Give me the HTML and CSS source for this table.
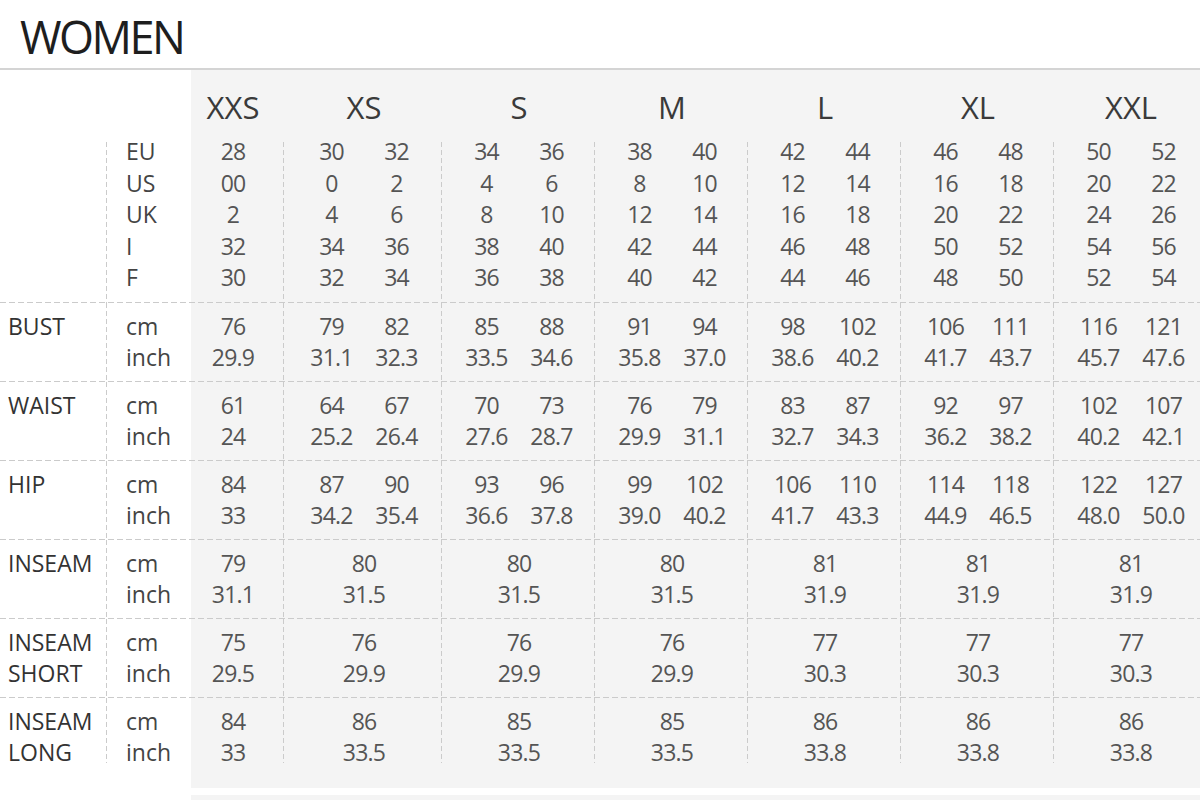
FILE: index.html
```
<!DOCTYPE html>
<html lang="en">
<head>
<meta charset="utf-8">
<title>WOMEN size chart</title>
<link rel="stylesheet" href="styles.css">
</head>
<body>
<h1 class="title">WOMEN</h1>
<div class="chart">
  <div class="row head">
    <div class="cell"></div>
    <div class="cell"></div>
    <div class="cell c">XXS</div>
    <div class="cell single xs"><span>XS</span></div>
    <div class="cell single"><span>S</span></div>
    <div class="cell single"><span>M</span></div>
    <div class="cell single"><span>L</span></div>
    <div class="cell single"><span>XL</span></div>
    <div class="cell single"><span>XXL</span></div>
  </div>

  <div class="row conv sep">
    <div class="cell lab vr"></div>
    <div class="cell unit"><span>EU</span><span>US</span><span>UK</span><span>I</span><span>F</span></div>
    <div class="cell c num vr"><span>28</span><span>00</span><span>2</span><span>32</span><span>30</span></div>
    <div class="cell pair num vr xs"><span>30</span><span>32</span><span>0</span><span>2</span><span>4</span><span>6</span><span>34</span><span>36</span><span>32</span><span>34</span></div>
    <div class="cell pair num vr"><span>34</span><span>36</span><span>4</span><span>6</span><span>8</span><span>10</span><span>38</span><span>40</span><span>36</span><span>38</span></div>
    <div class="cell pair num vr"><span>38</span><span>40</span><span>8</span><span>10</span><span>12</span><span>14</span><span>42</span><span>44</span><span>40</span><span>42</span></div>
    <div class="cell pair num vr"><span>42</span><span>44</span><span>12</span><span>14</span><span>16</span><span>18</span><span>46</span><span>48</span><span>44</span><span>46</span></div>
    <div class="cell pair num vr"><span>46</span><span>48</span><span>16</span><span>18</span><span>20</span><span>22</span><span>50</span><span>52</span><span>48</span><span>50</span></div>
    <div class="cell pair num"><span>50</span><span>52</span><span>20</span><span>22</span><span>24</span><span>26</span><span>54</span><span>56</span><span>52</span><span>54</span></div>
  </div>

  <div class="row meas sep">
    <div class="cell lab vr"><span>BUST</span></div>
    <div class="cell unit"><span>cm</span><span>inch</span></div>
    <div class="cell c num vr"><span>76</span><span>29.9</span></div>
    <div class="cell pair num vr xs"><span>79</span><span>82</span><span>31.1</span><span>32.3</span></div>
    <div class="cell pair num vr"><span>85</span><span>88</span><span>33.5</span><span>34.6</span></div>
    <div class="cell pair num vr"><span>91</span><span>94</span><span>35.8</span><span>37.0</span></div>
    <div class="cell pair num vr"><span>98</span><span>102</span><span>38.6</span><span>40.2</span></div>
    <div class="cell pair num vr"><span>106</span><span>111</span><span>41.7</span><span>43.7</span></div>
    <div class="cell pair num"><span>116</span><span>121</span><span>45.7</span><span>47.6</span></div>
  </div>

  <div class="row meas sep">
    <div class="cell lab vr"><span>WAIST</span></div>
    <div class="cell unit"><span>cm</span><span>inch</span></div>
    <div class="cell c num vr"><span>61</span><span>24</span></div>
    <div class="cell pair num vr xs"><span>64</span><span>67</span><span>25.2</span><span>26.4</span></div>
    <div class="cell pair num vr"><span>70</span><span>73</span><span>27.6</span><span>28.7</span></div>
    <div class="cell pair num vr"><span>76</span><span>79</span><span>29.9</span><span>31.1</span></div>
    <div class="cell pair num vr"><span>83</span><span>87</span><span>32.7</span><span>34.3</span></div>
    <div class="cell pair num vr"><span>92</span><span>97</span><span>36.2</span><span>38.2</span></div>
    <div class="cell pair num"><span>102</span><span>107</span><span>40.2</span><span>42.1</span></div>
  </div>

  <div class="row meas sep">
    <div class="cell lab vr"><span>HIP</span></div>
    <div class="cell unit"><span>cm</span><span>inch</span></div>
    <div class="cell c num vr"><span>84</span><span>33</span></div>
    <div class="cell pair num vr xs"><span>87</span><span>90</span><span>34.2</span><span>35.4</span></div>
    <div class="cell pair num vr"><span>93</span><span>96</span><span>36.6</span><span>37.8</span></div>
    <div class="cell pair num vr"><span>99</span><span>102</span><span>39.0</span><span>40.2</span></div>
    <div class="cell pair num vr"><span>106</span><span>110</span><span>41.7</span><span>43.3</span></div>
    <div class="cell pair num vr"><span>114</span><span>118</span><span>44.9</span><span>46.5</span></div>
    <div class="cell pair num"><span>122</span><span>127</span><span>48.0</span><span>50.0</span></div>
  </div>

  <div class="row meas sep">
    <div class="cell lab vr"><span>INSEAM</span></div>
    <div class="cell unit"><span>cm</span><span>inch</span></div>
    <div class="cell c num vr"><span>79</span><span>31.1</span></div>
    <div class="cell single num vr xs"><span>80</span><span>31.5</span></div>
    <div class="cell single num vr"><span>80</span><span>31.5</span></div>
    <div class="cell single num vr"><span>80</span><span>31.5</span></div>
    <div class="cell single num vr"><span>81</span><span>31.9</span></div>
    <div class="cell single num vr"><span>81</span><span>31.9</span></div>
    <div class="cell single num"><span>81</span><span>31.9</span></div>
  </div>

  <div class="row meas sep">
    <div class="cell lab vr"><span>INSEAM</span><span>SHORT</span></div>
    <div class="cell unit"><span>cm</span><span>inch</span></div>
    <div class="cell c num vr"><span>75</span><span>29.5</span></div>
    <div class="cell single num vr xs"><span>76</span><span>29.9</span></div>
    <div class="cell single num vr"><span>76</span><span>29.9</span></div>
    <div class="cell single num vr"><span>76</span><span>29.9</span></div>
    <div class="cell single num vr"><span>77</span><span>30.3</span></div>
    <div class="cell single num vr"><span>77</span><span>30.3</span></div>
    <div class="cell single num"><span>77</span><span>30.3</span></div>
  </div>

  <div class="row meas last">
    <div class="cell lab vr"><span>INSEAM</span><span>LONG</span></div>
    <div class="cell unit"><span>cm</span><span>inch</span></div>
    <div class="cell c num vr"><span>84</span><span>33</span></div>
    <div class="cell single num vr xs"><span>86</span><span>33.5</span></div>
    <div class="cell single num vr"><span>85</span><span>33.5</span></div>
    <div class="cell single num vr"><span>85</span><span>33.5</span></div>
    <div class="cell single num vr"><span>86</span><span>33.8</span></div>
    <div class="cell single num vr"><span>86</span><span>33.8</span></div>
    <div class="cell single num"><span>86</span><span>33.8</span></div>
  </div>
</div>
<div class="foot"></div>
</body>
</html>
```
FILE: styles.css
```
html, body {
  margin: 0;
  padding: 0;
  background: #ffffff;
}

body {
  width: 1200px;
  height: 800px;
  overflow: hidden;
  font-family: "Open Sans", "Noto Sans", sans-serif;
}

.title {
  margin: 0;
  padding: 4px 0 0 20px;
  height: 64px;
  font-size: 45px;
  font-weight: 400;
  line-height: 66px;
  letter-spacing: -2.5px;
  color: #1e1e1e;
  border-bottom: 2px solid #d4d4d4;
}

.chart {
  background: linear-gradient(to right, #ffffff 191px, #f4f4f4 191px);
  padding-bottom: 19px;
}

.row {
  display: grid;
  grid-template-columns: 107px 75px 102px 158px 153px 153px 153px 153px 146px;
}

.row.sep {
  background: repeating-linear-gradient(to right, #cbcbcb 0 6px, transparent 6px 9px) left bottom / 100% 1px no-repeat;
}

.cell {
  display: flex;
  flex-direction: column;
  font-size: 23px;
  line-height: 31.5px;
  padding: 8px 0 8px 0;
}

.vr {
  background: repeating-linear-gradient(to bottom, #cbcbcb 0 5px, transparent 5px 8px) right top / 1px 100% no-repeat;
}

.head .cell {
  padding: 8px 0 0 0;
  font-size: 31px;
  line-height: 58px;
  color: #3a3a3a;
}

.conv .cell {
  padding: 0 0 9px 0;
}

.conv .vr {
  background-position: right 6px;
  background-size: 1px calc(100% - 6px);
}

.last .cell {
  padding-bottom: 0;
}

.last .vr {
  background-size: 1px calc(100% - 6px);
}

.lab {
  padding-left: 8px !important;
  color: #333333;
}

.unit {
  padding-left: 19px !important;
  color: #444444;
}

.num {
  color: #555555;
  letter-spacing: -0.8px;
}

.c {
  text-align: center;
  align-items: center;
}

.pair {
  display: grid;
  grid-template-columns: 65px 65px;
  align-content: start;
  text-align: center;
  padding-left: 12px !important;
}

.single {
  display: grid;
  grid-template-columns: 130px;
  align-content: start;
  text-align: center;
  padding-left: 12px !important;
}

.xs {
  padding-left: 15px !important;
}

.foot {
  margin: 7px 0 0 191px;
  height: 20px;
  background: #f4f4f4;
}
```
